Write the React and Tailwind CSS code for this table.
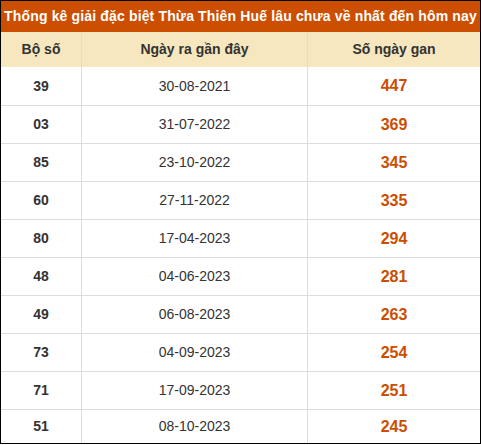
import React from 'react';

const rows = [
  ['39', '30-08-2021', '447'],
  ['03', '31-07-2022', '369'],
  ['85', '23-10-2022', '345'],
  ['60', '27-11-2022', '335'],
  ['80', '17-04-2023', '294'],
  ['48', '04-06-2023', '281'],
  ['49', '06-08-2023', '263'],
  ['73', '04-09-2023', '254'],
  ['71', '17-09-2023', '251'],
  ['51', '08-10-2023', '245'],
];

export default function App() {
  return (
    <div className="w-[481px] bg-white" style={{ fontFamily: '"Liberation Sans", Arial, sans-serif' }}>
      <div className="border border-black">
        <div className="h-[31px] bg-[#cc4e00] text-white font-bold text-[14px] tracking-[0.15px] flex items-center justify-center whitespace-nowrap">
          Thống kê giải đặc biệt Thừa Thiên Huế lâu chưa về nhất đến hôm nay
        </div>
        <div className="grid grid-cols-[81px_226px_1fr] h-[35px] bg-[#f6e7bf] text-[#333] font-bold text-[14px]">
          <div className="flex items-center justify-center border-r border-[#ddd]">Bộ số</div>
          <div className="flex items-center justify-center border-r border-[#ddd]">Ngày ra gần đây</div>
          <div className="flex items-center justify-center">Số ngày gan</div>
        </div>
        {rows.map(([n, d, g], i) => (
          <div
            key={n}
            className={`grid grid-cols-[81px_226px_1fr] ${i === rows.length - 1 ? 'h-[34px]' : 'h-[38px]'} ${i > 0 ? 'border-t border-[#ddd]' : ''}`}
          >
            <div className="flex items-center justify-center border-r border-[#ddd] font-bold text-[14px] text-[#333]">{n}</div>
            <div className="flex items-center justify-center border-r border-[#ddd] text-[14px] text-[#333]">{d}</div>
            <div className="flex items-center justify-center font-bold text-[16px] text-[#cc4e00]">{g}</div>
          </div>
        ))}
      </div>
    </div>
  );
}
